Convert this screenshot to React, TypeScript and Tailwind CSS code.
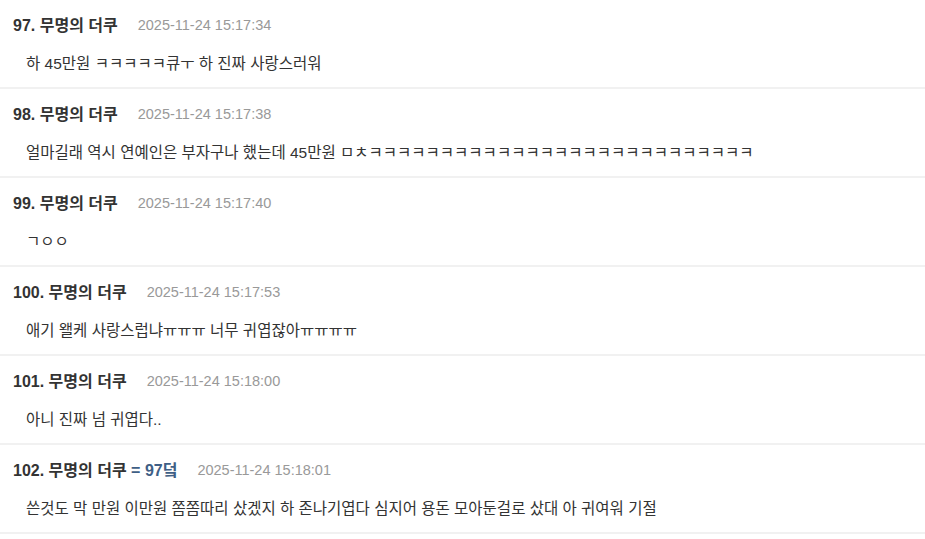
import React from "react";

type Item = { no: number; name: string; tag?: string; time: string; body: string };

const items: Item[] = [
  { no: 97, name: "무명의 더쿠", time: "2025-11-24 15:17:34", body: "하 45만원 ㅋㅋㅋㅋㅋ큐ㅜ 하 진짜 사랑스러워" },
  { no: 98, name: "무명의 더쿠", time: "2025-11-24 15:17:38", body: "얼마길래 역시 연예인은 부자구나 했는데 45만원 ㅁㅊㅋㅋㅋㅋㅋㅋㅋㅋㅋㅋㅋㅋㅋㅋㅋㅋㅋㅋㅋㅋㅋㅋㅋㅋㅋㅋㅋ" },
  { no: 99, name: "무명의 더쿠", time: "2025-11-24 15:17:40", body: "ㄱㅇㅇ" },
  { no: 100, name: "무명의 더쿠", time: "2025-11-24 15:17:53", body: "애기 왤케 사랑스럽냐ㅠㅠㅠ 너무 귀엽잖아ㅠㅠㅠㅠ" },
  { no: 101, name: "무명의 더쿠", time: "2025-11-24 15:18:00", body: "아니 진짜 넘 귀엽다.." },
  { no: 102, name: "무명의 더쿠", tag: "= 97덬", time: "2025-11-24 15:18:01", body: "쓴것도 막 만원 이만원 쫌쫌따리 샀겠지 하 존나기엽다 심지어 용돈 모아둔걸로 샀대 아 귀여워 기절" },
];

export default function App() {
  return (
    <div
      className="w-[925px] h-[539px] bg-white overflow-hidden"
      style={{ fontFamily: '"Liberation Sans", "Noto Sans CJK KR", sans-serif' }}
    >
      {items.map((it) => (
        <div key={it.no} className="h-[89px] border-b-2 border-[#f1f1f1] pt-[15px] pl-[13px]">
          <div className="flex items-center h-[22px]">
            <span className="text-[16px] font-bold text-[#333]">
              {it.no}. {it.name}
              {it.tag && <span className="text-[#3f5f86]"> {it.tag}</span>}
            </span>
            <span className="ml-[20px] text-[14.5px] text-[#999]">{it.time}</span>
          </div>
          <div className="mt-[16px] pl-[13px] h-[22px] leading-[22px] text-[15.5px] text-[#333] whitespace-nowrap">
            {it.body}
          </div>
        </div>
      ))}
    </div>
  );
}
